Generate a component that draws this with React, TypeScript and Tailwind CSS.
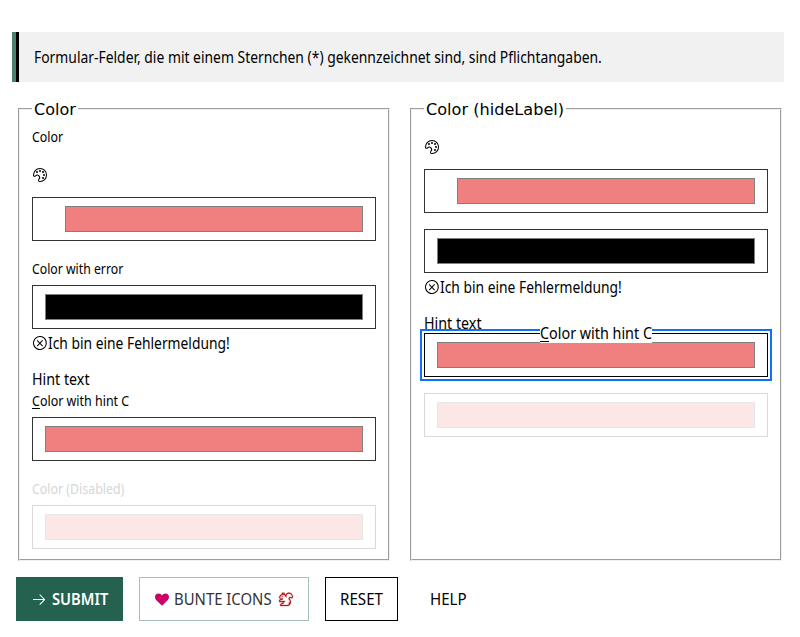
import { useLayoutEffect, useRef, useState, type ReactNode } from "react";
import { VscArrowRight, VscError, VscSquirrel, VscSymbolColor } from "react-icons/vsc";

/** Condenses a line of text so that it fills exactly the given width. */
function Fit({ width, children }: { width: number; children: ReactNode }) {
  const ref = useRef<HTMLSpanElement>(null);
  const [scale, setScale] = useState(1);
  useLayoutEffect(() => {
    if (ref.current) setScale(width / ref.current.offsetWidth);
  }, [width]);
  return (
    <span className="inline-block whitespace-nowrap" style={{ width }}>
      <span ref={ref} className="inline-block origin-left" style={{ transform: `scaleX(${scale})` }}>
        {children}
      </span>
    </span>
  );
}

function ColorField({ color = "bg-[#f08080]", icon = false, disabled = false, focused = false }: {
  color?: string; icon?: boolean; disabled?: boolean; focused?: boolean;
}) {
  const border = focused ? "border-black bg-white outline-2 outline-offset-2 outline-[#0f6fff]" : "border-[#333]";
  return (
    <div className={`flex h-11 w-[344px] shrink-0 border py-2 pr-3 ${icon ? "pl-8" : "pl-3"} ${border} ${disabled ? "opacity-[0.18]" : ""}`}>
      <div className={`grow border border-[#808080] ${color}`} />
    </div>
  );
}

function Label({ width, className = "", children }: { width: number; className?: string; children: ReactNode }) {
  return (
    <div className={`flex items-center text-[14px] leading-4 ${className}`}>
      <Fit width={width}>{children}</Fit>
    </div>
  );
}

function ErrorMessage() {
  return (
    <div className="flex h-7 items-center">
      <VscError className="size-4" />
      <Fit width={182}>Ich bin eine Fehlermeldung!</Fit>
    </div>
  );
}

function Group({ legend, width, children }: { legend: string; width: number; children: ReactNode }) {
  return (
    <fieldset className="h-[462px] w-[372px] border-2 border-[#f0f0f0] px-3 [border-style:groove]">
      <legend className="h-5 px-0.5 font-['DejaVu_Sans',Verdana,sans-serif] text-base leading-[22px]">
        <Fit width={width}>{legend}</Fit>
      </legend>
      <div className="flex flex-col">{children}</div>
    </fieldset>
  );
}

export default function App() {
  return (
    <div className="h-[637px] w-[800px] overflow-hidden bg-white pt-8 font-['Noto_Sans',sans-serif] text-[15.5px] leading-5 text-black">
      <div className="ml-3 flex h-[50px] w-[772px] items-center border-l-4 border-[#4a826e] bg-[#f1f1f1]">
        <div className="h-full w-[3px] bg-black" />
        <div className="pl-[15px]">
          <Fit width={568}>Formular-Felder, die mit einem Sternchen (*) gekennzeichnet sind, sind Pflichtangaben.</Fit>
        </div>
      </div>

      <div className="mt-[17px] ml-[18px] flex gap-5">
        <Group legend="Color" width={42}>
          <Label width={31} className="h-9">Color</Label>
          <div className="flex h-[42px] items-center pb-0.5"><VscSymbolColor className="size-4" /></div>
          <ColorField icon />
          <Label width={91} className="mt-3.5 mb-0.5 h-7">Color with error</Label>
          <ColorField color="bg-black" />
          <ErrorMessage />
          <div className="mt-3 flex h-[22px] items-center pb-0.5"><Fit width={58}>Hint text</Fit></div>
          <Label width={97} className="h-[26px] pb-1.5"><span className="underline underline-offset-2">C</span>olor with hint C</Label>
          <ColorField />
          <Label width={92} className="mt-3.5 mb-0.5 h-7 text-[#d6d6d6]">Color (Disabled)</Label>
          <ColorField disabled />
        </Group>

        <Group legend="Color (hideLabel)" width={138}>
          <div className="flex h-[50px] items-center pt-1.5"><VscSymbolColor className="size-4" /></div>
          <ColorField icon />
          <div className="mt-4"><ColorField color="bg-black" /></div>
          <ErrorMessage />
          <div className="mt-3 flex h-5 items-center"><Fit width={58}>Hint text</Fit></div>
          <div className="relative">
            <div className="absolute -inset-1 bg-white" />
            <div className="relative"><ColorField focused /></div>
            <div className="absolute -top-[9px] left-[116px] flex h-[19px] items-center bg-white pb-0.5">
              <Fit width={112}><span className="underline underline-offset-2">C</span>olor with hint C</Fit>
            </div>
          </div>
          <div className="mt-4"><ColorField disabled /></div>
        </Group>
      </div>

      <div className="mt-4 ml-4 flex h-11 gap-4">
        <button className="flex w-[107px] items-center bg-[#24614e] pl-[15px] font-semibold text-white">
          <VscArrowRight className="mr-[5px] size-4" />
          <Fit width={56}>SUBMIT</Fit>
        </button>
        <button className="flex w-[170px] items-center border border-[#a5c0b7] pl-3.5 text-[#333]">
          <svg viewBox="0 0 16 16" className="mr-1 size-4 fill-[#cc0066]">
            <path d="M8 14.8 2.1 8.900A4.100 4.100 0 0 1 1 6C1 4 2.600 2.500 4.500 2.500 6 2.500 7.300 3.300 8 4.500c.7-1.200 2-2 3.500-2C13.400 2.500 15 4 15 6c0 1.100-.4 2.100-1.100 2.900z" />
          </svg>
          <Fit width={98}>BUNTE ICONS</Fit>
          <VscSquirrel className="ml-1.5 size-4 stroke-[0.3] text-[#b81818]" />
        </button>
        <button className="flex w-[73px] items-center border border-black pl-3.5"><Fit width={43}>RESET</Fit></button>
        <button className="ml-4 flex items-center"><Fit width={37}>HELP</Fit></button>
      </div>
    </div>
  );
}
